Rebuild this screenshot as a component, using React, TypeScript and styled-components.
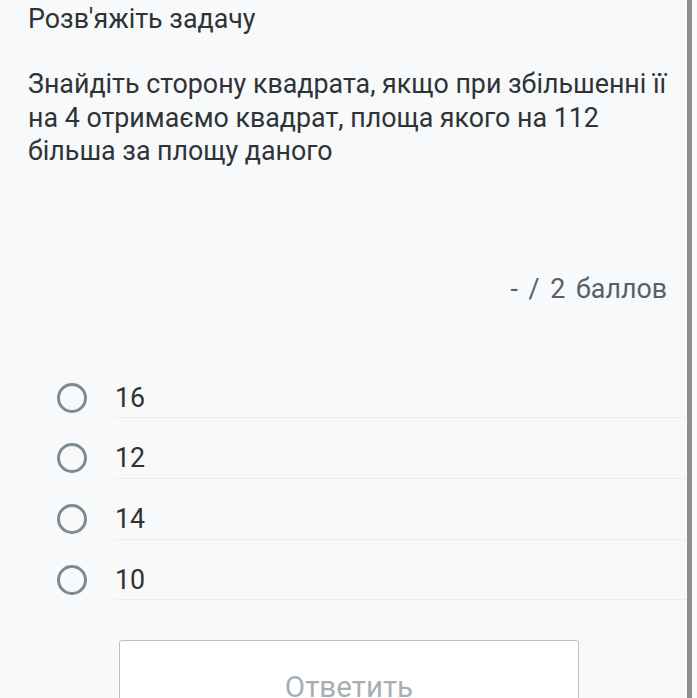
import React from 'react';
import styled, { createGlobalStyle } from 'styled-components';

const GlobalStyle = createGlobalStyle`
  html, body {
    margin: 0;
    padding: 0;
    background: #f8f9fb;
  }
  body {
    font-family: Roboto, "Noto Sans", sans-serif;
    color: #2f3335;
    overflow: hidden;
  }
`;

const Screen = styled.div`
  display: flex;
  width: 697px;
  height: 698px;
  overflow: hidden;
`;

const Content = styled.div`
  flex: 1;
  display: flex;
  flex-direction: column;
  padding: 2px 0 0 28px;
`;

const Scrollbar = styled.div`
  width: 5px;
  margin-right: 5px;
  background: #8d8f91;
`;

const Heading = styled.h1`
  margin: 0;
  font-size: 26.8px;
  font-weight: 400;
  line-height: 34px;
`;

const Question = styled.p`
  margin: 32px 0 0;
  padding-right: 10px;
  font-size: 26.8px;
  line-height: 33.5px;
`;

const Score = styled.div`
  margin-top: 103px;
  padding-right: 20px;
  text-align: right;
  font-size: 26.8px;
  line-height: 34px;
  color: #56606a;
  word-spacing: 4px;
`;

const Options = styled.ul`
  list-style: none;
  margin: 52px 0 0;
  padding: 0;
`;

const Option = styled.li`
  display: flex;
  align-items: flex-start;
  height: 60.7px;
`;

const Radio = styled.span`
  flex: none;
  box-sizing: border-box;
  width: 30px;
  height: 30px;
  border: 3.5px solid #7e8a92;
  border-radius: 50%;
  margin: 25px 28px 0 29px;
`;

const Label = styled.span`
  flex: 1;
  align-self: stretch;
  box-sizing: border-box;
  padding-top: 22px;
  font-size: 26.8px;
  line-height: 36px;
  border-bottom: 1.5px solid #eceef1;
`;

const Footer = styled.div`
  padding: 40px 0 0 91px;
`;

const AnswerButton = styled.button`
  width: 460px;
  height: 94px;
  padding: 0;
  background: #fff;
  border: 1.5px solid #b9c0c5;
  border-radius: 3px;
  font-family: Roboto, "Noto Sans", sans-serif;
  font-size: 29.5px;
  color: #a7afb5;
`;

const answers = ['16', '12', '14', '10'];

export default function App() {
  return (
    <Screen>
      <GlobalStyle />
      <Content>
        <Heading>Розв'яжіть задачу</Heading>
        <Question>
          Знайдіть сторону квадрата, якщо при збільшенні її на 4 отримаємо квадрат, площа якого на 112
          більша за площу даного
        </Question>
        <Score>- / 2 баллов</Score>
        <Options>
          {answers.map(a => (
            <Option key={a}>
              <Radio />
              <Label>{a}</Label>
            </Option>
          ))}
        </Options>
        <Footer>
          <AnswerButton>Ответить</AnswerButton>
        </Footer>
      </Content>
      <Scrollbar />
    </Screen>
  );
}
